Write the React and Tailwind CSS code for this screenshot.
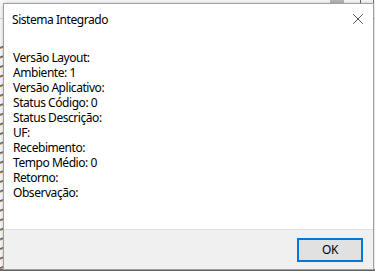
import { X } from 'lucide-react';

const fields = [
    'Versão Layout:',
    'Ambiente: 1',
    'Versão Aplicativo:',
    'Status Código: 0',
    'Status Descrição:',
    'UF:',
    'Recebimento:',
    'Tempo Médio: 0',
    'Retorno:',
    'Observação:',
];

export default function App() {
    return (
        <div className="w-[375px] h-[271px] bg-white overflow-hidden relative font-['Segoe_UI','Noto_Sans',sans-serif] text-[12px] tracking-[-0.45px] text-black">
            {/* Background window bits */}
            <div className="absolute left-0 top-[18px] w-[375px] h-px bg-[#d9d9d9]" />
            <div className="absolute left-[330px] top-0 w-[14px] h-[3px] bg-[#bdbdbd]" />
            <div className="absolute left-[360px] top-0 w-[14px] h-[3px] border-x border-[#6b6b6b]" />
            <div className="absolute left-0 top-[40px] w-[3px] h-[231px] bg-[repeating-linear-gradient(160deg,#ffffff_0px,#ffffff_6px,#3a6ea5_7px,#d48a2c_8px,#ffffff_9px)]" />
            <div className="absolute left-0 bottom-0 w-[375px] h-[2px] bg-[#6d6d6d]" />

            {/* Dialog */}
            <div className="absolute left-[3px] top-[3px] w-[371px] h-[267px] bg-white border border-[#a0a0a0] shadow-[0_0_6px_rgba(0,0,0,0.25)] flex flex-col">
                <div className="h-[29px] flex items-center justify-between pl-[8px] pr-[6px] shrink-0">
                    <span className="leading-none pt-[2px]">Sistema Integrado</span>
                    <X size={18} strokeWidth={0.9} className="text-black" />
                </div>
                <div className="flex-1 pt-[17px] pl-[9px] flex flex-col">
                    {fields.map((f) => (
                        <div key={f} className="h-[15px] leading-[15px] whitespace-nowrap">{f}</div>
                    ))}
                </div>
                <div className="h-[40px] shrink-0 bg-[#f0f0f0] border-t border-[#dfdfdf] flex justify-end items-start pt-[8px] pr-[10px]">
                    <button className="w-[66px] h-[24px] bg-[#e1e1e1] border-2 border-[#0078d7] flex items-center justify-center leading-none">
                        OK
                    </button>
                </div>
            </div>
        </div>
    );
}
